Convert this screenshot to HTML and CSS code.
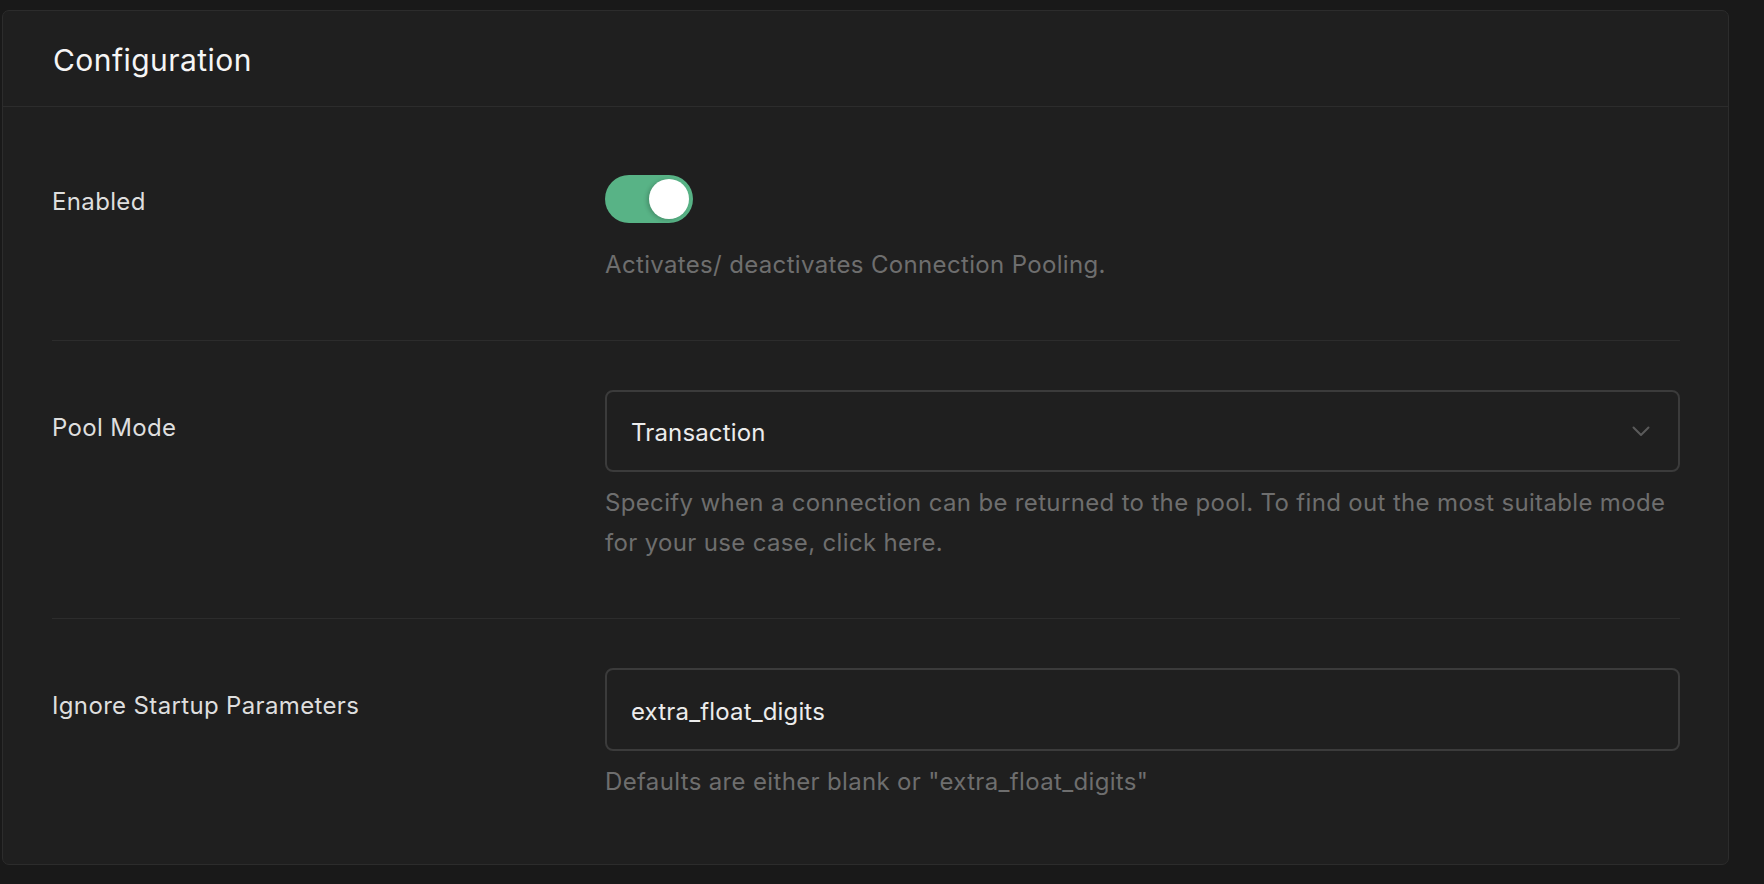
FILE: index.html
```html
<!DOCTYPE html>
<html lang="en">
<head>
    <meta charset="UTF-8">
    <meta name="viewport" content="width=device-width, initial-scale=1.0">
    <title>Connection Pooling</title>
    <link rel="stylesheet" href="styles.css">
</head>
<body>
    <main class="panel">
        <header class="panel-header">
            <h2>Configuration</h2>
        </header>

        <div class="panel-body">
            <div class="row row-first">
                <label class="row-label row-label-toggle">Enabled</label>
                <div class="row-field">
                    <div class="toggle">
                        <span class="toggle-knob"></span>
                    </div>
                    <p class="hint hint-toggle">Activates/ deactivates Connection Pooling.</p>
                </div>
            </div>

            <div class="row">
                <label class="row-label">Pool Mode</label>
                <div class="row-field">
                    <div class="select">
                        <span>Transaction</span>
                        <svg class="chevron" width="18" height="11" viewBox="0 0 18 11" fill="none">
                            <path d="M1.5 1.5L9 9L16.5 1.5" stroke="#5a5a5a" stroke-width="2" stroke-linecap="round" stroke-linejoin="round"/>
                        </svg>
                    </div>
                    <p class="hint">Specify when a connection can be returned to the pool. To find out the most suitable mode for your use case, click here.</p>
                </div>
            </div>

            <div class="row row-last">
                <label class="row-label">Ignore Startup Parameters</label>
                <div class="row-field">
                    <div class="text-input">extra_float_digits</div>
                    <p class="hint">Defaults are either blank or "extra_float_digits"</p>
                </div>
            </div>
        </div>
    </main>
</body>
</html>
```

FILE: styles.css
```css
body {
    background-color: #191919;
    margin: 0;
    padding: 10px 0 0 2px;
    font-family: 'Inter', 'Noto Sans', sans-serif;
    overflow: hidden;
    height: 100vh;
    box-sizing: border-box;
}

.panel {
    width: 1727px;
    height: 855px;
    box-sizing: border-box;
    background-color: #1f1f1f;
    border: 1px solid #2c2c2c;
    border-radius: 7px;
}

.panel-header {
    padding: 31px 48px 0 50px;
    height: 96px;
    box-sizing: border-box;
    border-bottom: 1px solid #2c2c2c;
}

.panel-header h2 {
    margin: 0;
    font-size: 30px;
    line-height: 36px;
    font-weight: 400;
    letter-spacing: 0.45px;
    color: #f5f5f5;
}

.panel-body {
    padding: 0 48px 0 49px;
}

.row {
    display: grid;
    grid-template-columns: 553px 1fr;
    padding: 49px 0 55px;
    border-bottom: 1px solid #2c2c2c;
}

.row-first {
    padding-top: 68px;
}

.row-last {
    border-bottom: none;
}

.row-label {
    padding-top: 20px;
    font-size: 24px;
    line-height: 36px;
    letter-spacing: 0.35px;
    color: #dedede;
}

.row-label-toggle {
    padding-top: 9px;
}

.hint {
    margin: 11px 0 0;
    font-size: 24px;
    line-height: 40px;
    letter-spacing: 0.34px;
    color: #6e6e6e;
}

.hint-toggle {
    margin-top: 22px;
}

.toggle {
    width: 88px;
    height: 48px;
    box-sizing: border-box;
    padding: 4px;
    border-radius: 24px;
    background-color: #58b386;
    display: flex;
    justify-content: flex-end;
}

.toggle-knob {
    width: 40px;
    height: 40px;
    border-radius: 50%;
    background-color: #fff;
    box-shadow: -2px 1px 4px rgba(0, 0, 0, 0.2);
}

.select,
.text-input {
    height: 82px;
    box-sizing: border-box;
    border: 2px solid #3b3b3b;
    border-radius: 8px;
    padding: 3px 28px 0 24px;
    display: flex;
    align-items: center;
    justify-content: space-between;
    font-size: 24px;
    letter-spacing: 0.15px;
    color: #ececec;
}

.text-input {
    height: 83px;
}

.chevron {
    display: block;
    margin-top: -3px;
}
```
